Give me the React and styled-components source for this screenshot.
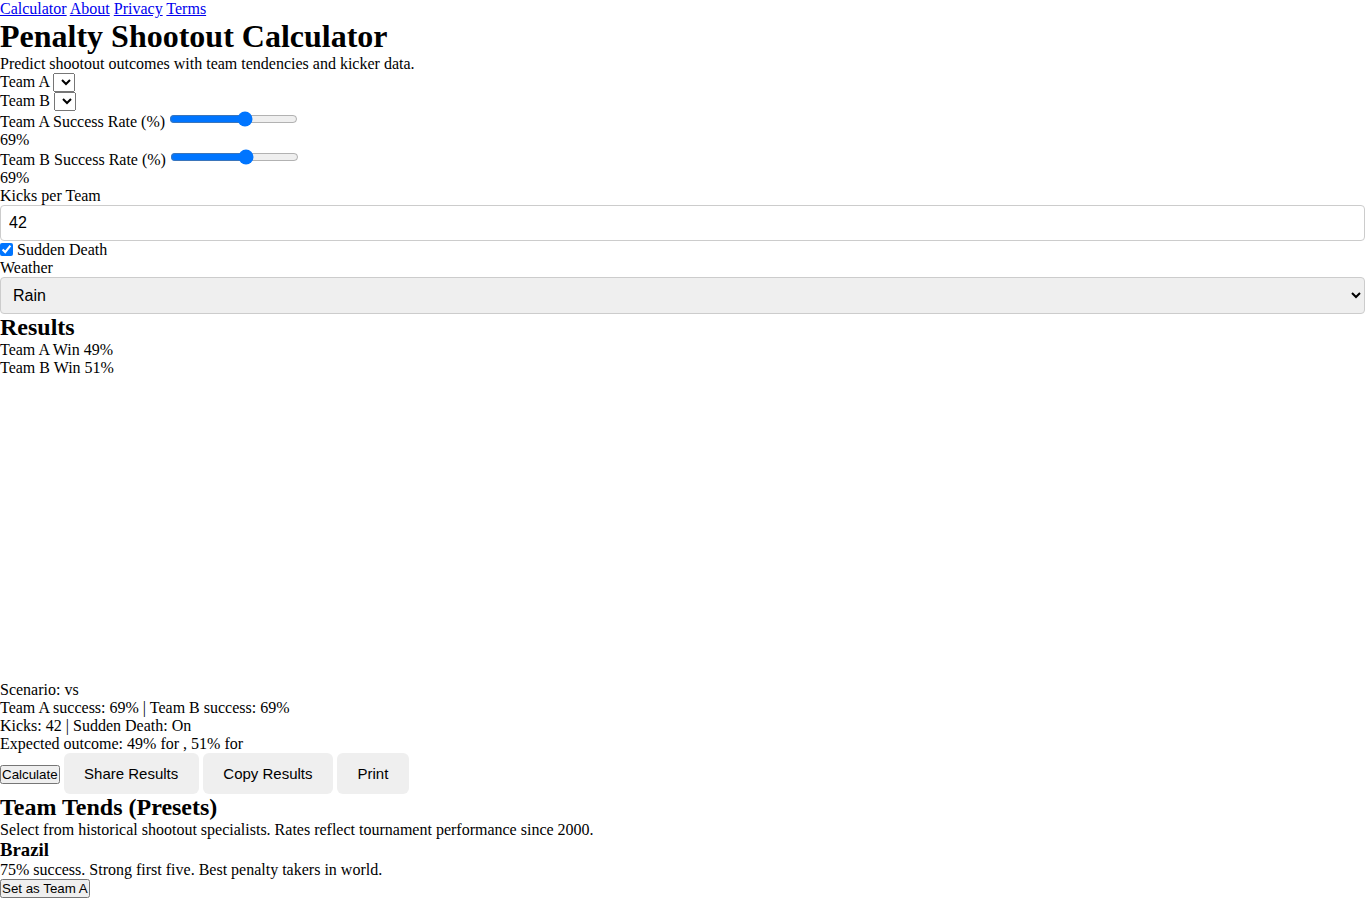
import React from "react";
import styled, { createGlobalStyle } from "styled-components";

const Global = createGlobalStyle`
  * { margin: 0; padding: 0; box-sizing: border-box; }
  body {
    font-family: "Liberation Serif", "Times New Roman", serif;
    font-size: 16px;
    color: #000;
    background: #fff;
  }
`;

const Nav = styled.nav``;
const NavLink = styled.a`
  color: #0000ee;
  text-decoration: underline;
`;
const Title = styled.h1`
  font-size: 32px;
  font-weight: bold;
`;
const SectionTitle = styled.h2`
  font-size: 24px;
  font-weight: bold;
`;
const CardTitle = styled.h3`
  font-size: 18.72px;
  font-weight: bold;
`;
const Text = styled.p``;
const Field = styled.div``;
const Line = styled.div``;
const TeamSelect = styled.select``;
const Range = styled.input.attrs({ type: "range" })``;
const Check = styled.input.attrs({ type: "checkbox" })`
  vertical-align: -1px;
`;
const NumberInput = styled.input`
  display: block;
  width: 100%;
  padding: 8px;
  border: 1px solid #ccc;
  border-radius: 4px;
  font-family: "Liberation Sans", Arial, sans-serif;
  font-size: 16px;
`;
const WideSelect = styled.select`
  display: block;
  width: 100%;
  padding: 8px;
  border: 1px solid #ccc;
  border-radius: 4px;
  background: #efefef;
  font-family: "Liberation Sans", Arial, sans-serif;
  font-size: 16px;
  color: #000;
`;
const ChartArea = styled.div`
  height: 304px;
`;
const Actions = styled.div``;
const PlainButton = styled.button``;
const ActionButton = styled.button`
  padding: 12px 20.5px;
  border: none;
  border-radius: 6px;
  background: #efefef;
  font-family: "Liberation Sans", Arial, sans-serif;
  font-size: 15px;
  color: #000;
`;

export default function App() {
  return (
    <>
      <Global />
      <Nav>
        <NavLink href="#">Calculator</NavLink> <NavLink href="#">About</NavLink>{" "}
        <NavLink href="#">Privacy</NavLink> <NavLink href="#">Terms</NavLink>
      </Nav>
      <Title>Penalty Shootout Calculator</Title>
      <Text>Predict shootout outcomes with team tendencies and kicker data.</Text>
      <Field>
        <label>Team A</label> <TeamSelect />
      </Field>
      <Field>
        <label>Team B</label> <TeamSelect />
      </Field>
      <Field>
        <label>Team A Success Rate (%)</label> <Range min="30" max="95" defaultValue="69" />
        <Line>69%</Line>
      </Field>
      <Field>
        <label>Team B Success Rate (%)</label> <Range min="30" max="95" defaultValue="69" />
        <Line>69%</Line>
      </Field>
      <Field>
        <label>Kicks per Team</label>
        <NumberInput type="number" defaultValue="42" />
      </Field>
      <Field>
        <label>
          <Check defaultChecked /> Sudden Death
        </label>
      </Field>
      <Field>
        <label>Weather</label>
        <WideSelect defaultValue="Rain">
          <option>Clear</option>
          <option>Rain</option>
          <option>Wind</option>
        </WideSelect>
      </Field>
      <SectionTitle>Results</SectionTitle>
      <Line>Team A Win 49%</Line>
      <Line>Team B Win 51%</Line>
      <ChartArea />
      <Line>Scenario: vs</Line>
      <Line>Team A success: 69% | Team B success: 69%</Line>
      <Line>Kicks: 42 | Sudden Death: On</Line>
      <Line>Expected outcome: 49% for , 51% for</Line>
      <Actions>
        <PlainButton>Calculate</PlainButton> <ActionButton>Share Results</ActionButton>{" "}
        <ActionButton>Copy Results</ActionButton> <ActionButton>Print</ActionButton>
      </Actions>
      <SectionTitle>Team Tends (Presets)</SectionTitle>
      <Text>Select from historical shootout specialists. Rates reflect tournament performance since 2000.</Text>
      <CardTitle>Brazil</CardTitle>
      <Text>75% success. Strong first five. Best penalty takers in world.</Text>
      <PlainButton>Set as Team A</PlainButton>
    </>
  );
}
